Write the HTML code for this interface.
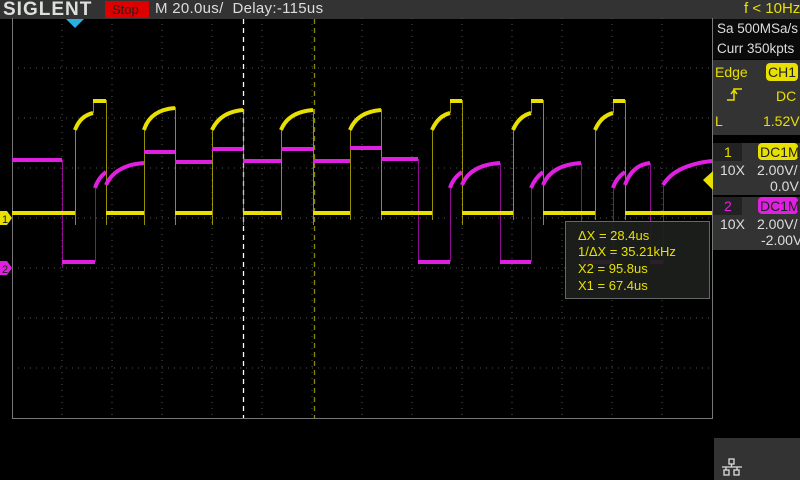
<!DOCTYPE html>
<html><head><style>
body{margin:0;width:800px;height:480px;background:#000;position:relative;overflow:hidden;font-family:"Liberation Sans",sans-serif}
.a{position:absolute}
.t{position:absolute;font-size:13px;white-space:nowrap;line-height:16px}
</style></head><body>
<div class="a" style="left:0;top:0;width:713px;height:19px;background:#333"></div>
<div class="t" style="left:3px;top:0px;font-size:19px;font-weight:bold;color:#dde0dd;letter-spacing:1px;line-height:19px">SIGLENT</div>
<div class="a" style="left:105px;top:1px;width:44px;height:17px;background:#d00"></div>
<div class="t" style="left:112px;top:2px;color:#222;font-size:13px">Stop</div>
<div class="t" style="left:155px;top:1px;color:#ddd;font-size:15px;letter-spacing:0.3px">M 20.0us/&nbsp; Delay:-115us</div>
<div class="a" style="left:713px;top:0;width:87px;height:19px;background:#333"></div>
<div class="t" style="left:744px;top:1px;color:#e8e000;font-size:15px">f &lt; 10Hz</div>
<div class="a" style="left:713px;top:19px;width:87px;height:40px;background:#0a0a0a"></div>
<div class="t" style="left:717px;top:21px;color:#ddd;font-size:13.5px">Sa 500MSa/s</div>
<div class="t" style="left:717px;top:41px;color:#ddd;font-size:13.5px">Curr 350kpts</div>
<div class="a" style="left:713px;top:60px;width:87px;height:75px;background:#333"></div>
<div class="t" style="left:715px;top:64px;color:#e8e000;font-size:14px">Edge</div>
<div class="a" style="left:766px;top:63px;width:32px;height:18px;background:#e8e000;border-radius:4px"></div>
<div class="t" style="left:768px;top:64px;color:#222;font-size:14px">CH1</div>
<svg class="a" style="left:725px;top:86px" width="20" height="16"><path d="M2 14H9V3H17M6 8L9 4L12 8" stroke="#e8e000" stroke-width="1.5" fill="none"/></svg>
<div class="t" style="left:776px;top:88px;color:#e8e000;font-size:14px">DC</div>
<div class="t" style="left:715px;top:113px;color:#e8e000;font-size:14px">L</div>
<div class="t" style="left:763px;top:113px;color:#e8e000;font-size:14px">1.52V</div>
<div class="a" style="left:713px;top:143px;width:87px;height:52px;background:#333"></div>
<div class="a" style="left:713px;top:143px;width:29px;height:18px;background:#222"></div>
<div class="t" style="left:724px;top:144px;color:#e8e000;font-size:14px">1</div>
<div class="a" style="left:758px;top:143px;width:40px;height:17px;background:#e8e000;border-radius:4px"></div>
<div class="t" style="left:760px;top:144px;color:#222;font-size:14px">DC1M</div>
<div class="t" style="left:720px;top:162px;color:#ddd;font-size:14px">10X</div>
<div class="t" style="left:757px;top:162px;color:#ddd;font-size:14px">2.00V/</div>
<div class="t" style="left:770px;top:178px;color:#ddd;font-size:14px">0.0V</div>
<div class="a" style="left:713px;top:197px;width:87px;height:53px;background:#333"></div>
<div class="a" style="left:713px;top:197px;width:29px;height:18px;background:#222"></div>
<div class="t" style="left:724px;top:198px;color:#e020e0;font-size:14px">2</div>
<div class="a" style="left:758px;top:197px;width:40px;height:17px;background:#e020e0;border-radius:4px"></div>
<div class="t" style="left:760px;top:198px;color:#222;font-size:14px">DC1M</div>
<div class="t" style="left:720px;top:216px;color:#ddd;font-size:14px">10X</div>
<div class="t" style="left:757px;top:216px;color:#ddd;font-size:14px">2.00V/</div>
<div class="t" style="left:761px;top:232px;color:#ddd;font-size:14px">-2.00V</div>
<div class="a" style="left:714px;top:438px;width:86px;height:42px;background:#333"></div>
<svg class="a" style="left:720px;top:458px" width="24" height="20"><g stroke="#ddd" stroke-width="1.3" fill="none"><rect x="9" y="1" width="5" height="5"/><path d="M11.5 6V9M2 9H22M6 9V12M17 9V12"/><rect x="4" y="12" width="5" height="5"/><rect x="14" y="12" width="5" height="5"/></g></svg>
<svg class="a" style="left:0;top:0" width="713" height="480">
<g stroke="#555" stroke-width="1" stroke-dasharray="1 5">
<path d="M62 18V418M112 18V418M162 18V418M212 18V418M262 18V418M312 18V418M362 18V418M412 18V418M462 18V418M512 18V418M562 18V418M612 18V418M662 18V418"/>
<path d="M12 68H712M12 118H712M12 168H712M12 218H712M12 268H712M12 318H712M12 368H712"/>
</g>
<path d="M12.5 18V418.5H712.5V18" stroke="#777" fill="none"/>
<path d="M243.5 19V418" stroke="#fff" stroke-dasharray="5 4" stroke-width="1.3"/>
<path d="M314.5 19V418" stroke="#8a8a00" stroke-dasharray="5 4" stroke-width="1.3"/>
<g fill="none" stroke-width="1" opacity="0.75">
<path stroke="#c010c0" d="M62.5 160V268M95.5 262V188M106.5 172V190M144.5 163V152M175.5 152V162M212.5 162V149M243.5 149V161M281.5 161V149M313.5 149V161M350.5 161V148M381.5 148V159M418.5 159V262M450.5 262V188M462.5 172V190M500.5 163V262M531.5 262V188M543.5 172V190M581.5 163V262M613.5 262V188M625.5 172V190M650.5 163V262M663.5 262V185"/>
<path stroke="#c8c000" d="M75.5 225V130M93.5 113V101M106.5 100V225M144.5 225V130M175.5 107V225M212.5 225V130M243.5 109V225M281.5 220V130M313.5 109V225M350.5 220V130M381.5 109V220M432.5 220V130M450.5 113V101M462.5 100V225M513.5 220V130M531.5 113V101M543.5 100V225M595.5 220V130M613.5 113V101M625.5 100V220"/>
</g>
<g fill="none" stroke-width="4">
<path stroke="#e020e0" d="M12 160H62M62 262H95M95 188Q98 178 106 172M106 185Q115 165 144 163M144 152H175M175 162H212M212 149H243M243 161H281M281 149H313M313 161H350M350 148H381M381 159H418M418 262H450M450 188Q453 178 462 172M462 185Q470 165 500 163M500 262H531M531 188Q535 178 543 172M543 185Q551 165 581 163M581 262H613M613 188Q616 178 625 172M625 185Q632 165 650 163M650 262H663M663 185Q675 165 712 161"/>
<path stroke="#e8e000" d="M12 213H75M75 130Q80 116 93 113M93 101H106M106 213H144M144 130Q150 110 175 108M175 213H212M212 130Q220 112 243 110M243 213H281M281 130Q288 112 313 110M313 213H350M350 130Q357 112 381 110M381 213H432M432 130Q438 116 450 113M450 101H462M462 213H513M513 130Q519 116 531 113M531 101H543M543 213H595M595 130Q601 116 613 113M613 101H625M625 213H712"/>
</g>
<path d="M66 19H84L75 28Z" fill="#2ab0e0"/>
<path d="M0 211H7L12 218L7 225H0Z" fill="#e8e000"/>
<text x="2" y="223" font-size="11" fill="#222" font-family="Liberation Sans">1</text>
<path d="M0 261H7L12 268L7 275H0Z" fill="#e020e0"/>
<text x="2" y="273" font-size="11" fill="#222" font-family="Liberation Sans">2</text>
<path d="M713 171V190L703 180Z" fill="#e8e000"/>
<rect x="565.5" y="221.5" width="144" height="77" fill="#1c1f1c" fill-opacity="0.92" stroke="#666"/>
<g font-family="Liberation Sans" font-size="13" fill="#e8e000">
<text x="578" y="240">ΔX = 28.4us</text>
<text x="578" y="256">1/ΔX = 35.21kHz</text>
<text x="578" y="273">X2 = 95.8us</text>
<text x="578" y="290">X1 = 67.4us</text>
</g>
</svg>
</body></html>
